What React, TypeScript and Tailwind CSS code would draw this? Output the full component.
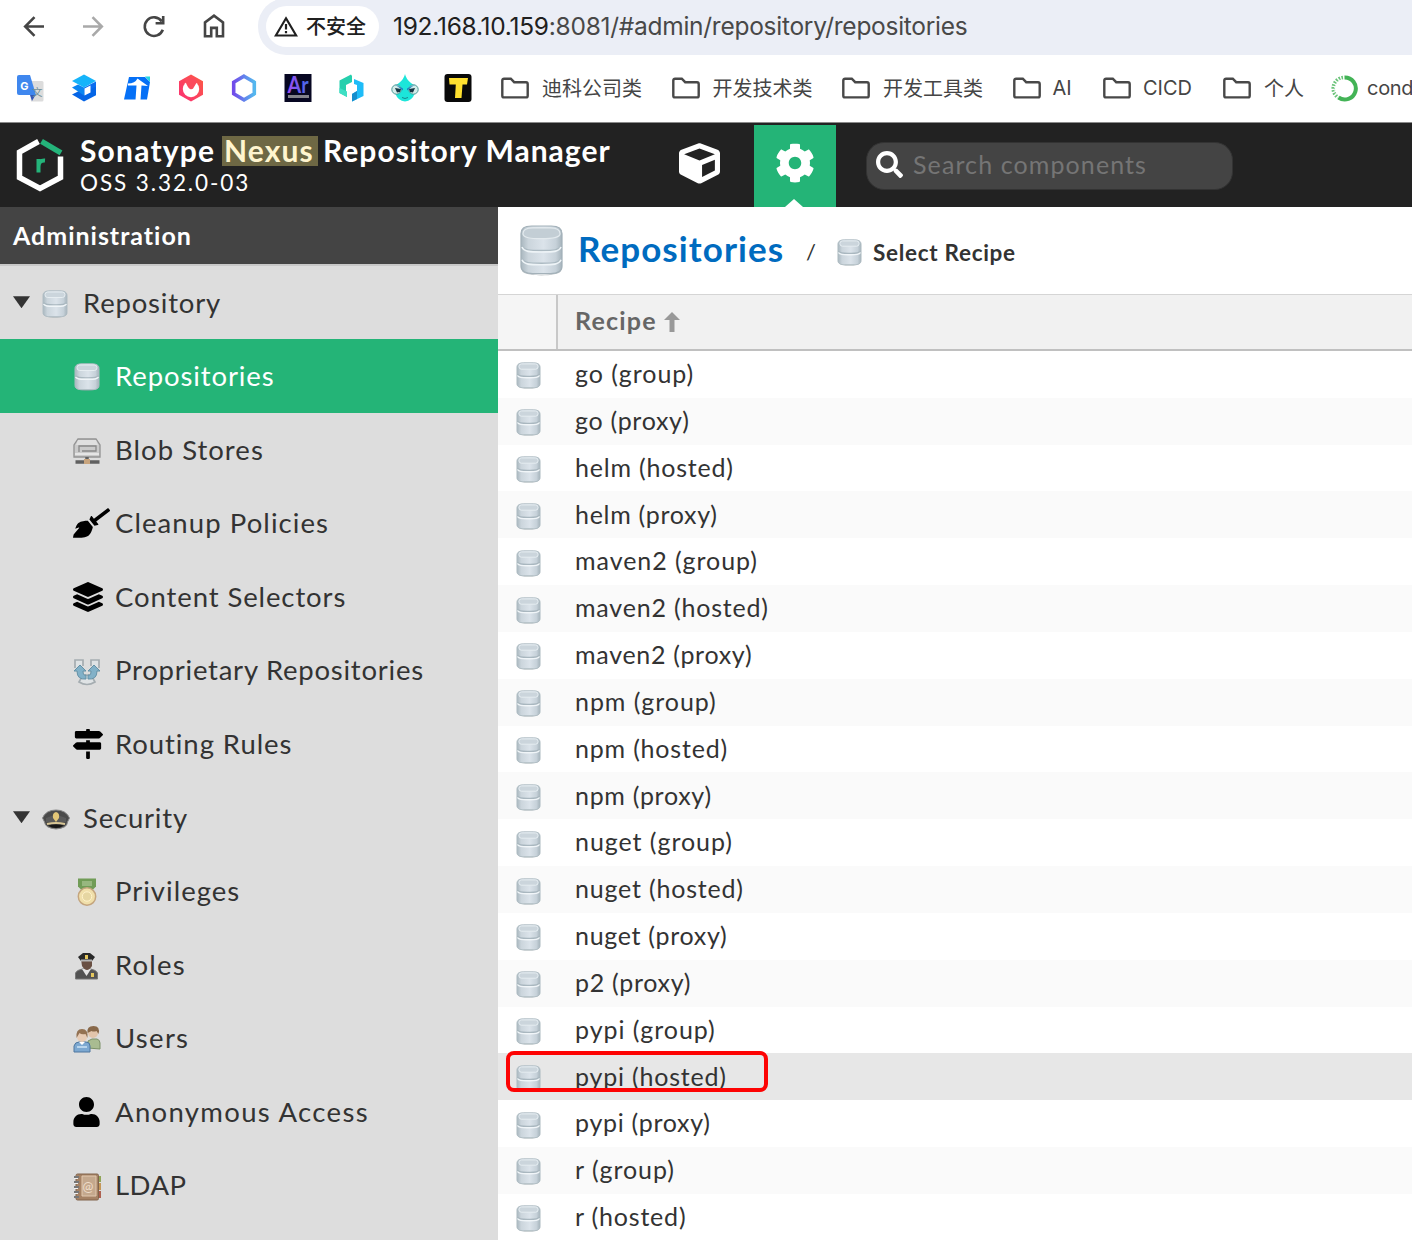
import React from "react";
import { FaBroom, FaCog, FaCube, FaLayerGroup, FaMapSigns, FaSearch, FaUser } from "react-icons/fa";

const cjk = "font-['Inter','Noto_Sans_CJK_SC',sans-serif]";

function DatabaseIcon({ className, tall = false }: { className: string; tall?: boolean }) {
  const id = React.useId();
  return (
    <svg viewBox={tall ? "0 0 44 52" : "0 0 26 28"} className={className} preserveAspectRatio="none">
      <defs>
        <linearGradient id={id} x1="0" x2="1" y1="0" y2="0">
          <stop offset="0" stopColor="#a9b7bf" />
          <stop offset="0.18" stopColor="#cbd5dc" />
          <stop offset="0.55" stopColor="#dbe3ea" />
          <stop offset="0.85" stopColor="#c6d1d9" />
          <stop offset="1" stopColor="#a5b3bb" />
        </linearGradient>
      </defs>
      {tall ? (
        <g>
          <path d="M2 44c2 9 38 9 40 0v3c-3 6-37 6-40 0z" fill="#7f8b92" opacity="0.5" />
          <path d="M1 9C1 4 4 1 12 1h20c8 0 11 3 11 8v33c0 5-5 7.500-12 7.500H13C6 49.500 1 47 1 42z" fill={`url(#${id})`} stroke="#a3b1b9" strokeWidth="1.200" />
          <path d="M3 9c0-4 4-6 10-6h18c6 0 10 2 10 6s-8 5-19 5S3 13 3 9z" fill="#c3ced5" stroke="#e3eaee" strokeWidth="1.300" />
          <path d="M2 21c2 5 8 5 20 5s18 0 20-5M2 34c2 5 8 5 20 5s18 0 20-5" fill="none" stroke="#acbac2" strokeWidth="1.500" />
          <path d="M2 22.500c2 5 8 5 20 5s18 0 20-5M2 35.500c2 5 8 5 20 5s18 0 20-5" fill="none" stroke="#eef4f7" strokeWidth="1.600" />
        </g>
      ) : (
        <g>
          <path d="M1 22c2 5 22 5 24 0v2c-2 5-22 5-24 0z" fill="#8b979e" opacity="0.5" />
          <path d="M1 5.500C1 2 4 .8 8 .8h10c4 0 7 1.200 7 4.700v17c0 3-3 4.200-7 4.200H8c-4 0-7-1.200-7-4.200z" fill={`url(#${id})`} stroke="#b0bdc4" strokeWidth="1" />
          <rect x="3" y="2" width="20" height="5.500" rx="2.700" fill="#cbd5dc" stroke="#e6edf1" strokeWidth="1" />
          <path d="M1.500 12.500c1.500 2.500 5 2.300 11.500 2.300s10 .2 11.500-2.300" fill="none" stroke="#a9b7bf" strokeWidth="1.300" />
          <path d="M1.500 14c1.500 2.500 5 2.300 11.500 2.300s10 .2 11.500-2.300" fill="none" stroke="#f0f5f8" strokeWidth="1.400" />
        </g>
      )}
    </svg>
  );
}

const Folder = () => (
  <svg viewBox="0 0 28 22" className="h-[22px] w-7 shrink-0" fill="none" stroke="#484848" strokeWidth="2.400">
    <path d="M3 1.700h6.800l3.400 3.500h11.800a1.700 1.700 0 0 1 1.700 1.700v11.800a1.700 1.700 0 0 1-1.700 1.700H3a1.700 1.700 0 0 1-1.700-1.700V3.400A1.700 1.700 0 0 1 3 1.700z" />
  </svg>
);

function Browser() {
  return (
    <div className={`h-[123px] overflow-hidden border-b border-[#8a8a8a] bg-white ${cjk}`}>
      <div className="flex h-[55px] overflow-hidden">
        <div className="flex h-[53px] w-[258px] shrink-0 items-center">
          <svg viewBox="0 0 258 53" className="h-[53px] w-[258px]" fill="none" stroke="#454545" strokeWidth="2.600">
            <path d="M44 26.500H25M34.500 17.200l-9.300 9.300 9.300 9.300" />
            <path d="M83 26.500h19M92.500 17.200l9.300 9.300-9.300 9.300" stroke="#a9a9a9" />
            <path d="M161.800 21.500a9.300 9.300 0 1 0 1 8.200M163.200 16v7.300h-7.600" />
            <path d="M205 36.300V22.400l9-6.700 9 6.700v13.900h-6.200v-8.400h-5.600v8.400z" />
          </svg>
        </div>
        <div className="mt-[-2px] flex h-[57px] flex-1 items-center rounded-l-[28px] bg-[#ebeef6] pl-2">
          <div className="flex h-[41px] w-[113px] shrink-0 items-center rounded-full bg-white pl-2">
            <svg viewBox="0 0 24 21" className="h-[21px] w-6" fill="none" stroke="#202020" strokeWidth="2.200">
              <path d="M12 2.300 22.200 19.500H1.800z" />
              <path d="M12 8v5.500M12 15v2.200" />
            </svg>
            <span className="ml-2 text-[20px] font-medium text-[#202020]">不安全</span>
          </div>
          <span className="ml-[14px] whitespace-nowrap text-[24.500px] tracking-[-0.270px] text-[#484848]">
            <span className="text-[#202020]">192.168.10.159</span>:8081/#admin/repository/repositories
          </span>
        </div>
      </div>
      <div className="flex h-[66px] items-center pl-[3.500px] text-[20px] text-[#454545]">
        {bookmarks.map((icon, i) => (
          <div key={i} className="flex w-[53.500px] shrink-0 justify-center">
            <svg viewBox="0 0 28 28" className="h-7 w-7">{icon}</svg>
          </div>
        ))}
        <div className="ml-4 flex items-center whitespace-nowrap">
          <div className="flex w-[170.500px] items-center gap-[13px]"><Folder /><span className="pt-0.5">迪科公司类</span></div>
          <div className="flex w-[170.500px] items-center gap-[13px]"><Folder /><span className="pt-0.5">开发技术类</span></div>
          <div className="flex w-[170.500px] items-center gap-[13px]"><Folder /><span className="pt-0.5">开发工具类</span></div>
          <div className="flex w-[90.500px] items-center gap-3"><Folder />AI</div>
          <div className="flex w-[120px] items-center gap-3"><Folder />CICD</div>
          <div className="flex w-[108px] items-center gap-[13px]"><Folder /><span className="pt-0.5">个人</span></div>
          <div className="flex items-center gap-[9px] tracking-[-0.3px]">
            <svg viewBox="0 0 27 27" className="h-[27px] w-[27px]" fill="none" stroke="#43b356" strokeWidth="4">
              <path d="M13.500 2.500a11 11 0 1 1-6 20" />
              <path d="M12 2.500a11 11 0 0 0-5 20" strokeDasharray="1.600 1.300" strokeWidth="3.600" opacity="0.8" />
              <path d="M9 5a10 10 0 0 0-3 15" strokeDasharray="1 2" stroke="#fff" strokeWidth="1.200" />
            </svg>
            cond
          </div>
        </div>
      </div>
    </div>
  );
}

const bookmarks = [
  <g>
    <path d="M13 7h13q1.500 0 1.500 1.500V26q0 1.500-1.500 1.500H15z" fill="#dcdcdc" />
    <path d="M3 1h11l6 20H3q-2 0-2-2V3q0-2 2-2z" fill="#3f87ee" />
    <path d="M14 21h5.500L16 27z" fill="#3455b8" />
    <text x="4.300" y="15.500" fontSize="11" fontWeight="700" fill="#fff">G</text>
    <text x="16" y="21.500" fontSize="10.500" fill="#71909a">文</text>
  </g>,
  <g>
    <path d="m2 20.500 6-3 18-9v12.700L14 27.500z" fill="#0565e6" />
    <path d="m2 13.500 6-3 6 3v8z" fill="#0a86f2" />
    <path d="m14 13.500 12-6v5l-12 6z" fill="#0a6cf0" />
    <path d="M14 .5 26 7l-12 6.500L2 7z" fill="#16b4fa" />
    <path d="m14.500 14.500 6-3v7l-6 3z" fill="#fff" />
  </g>,
  <g>
    <path d="M6 3h16l5 5-3 17.500H1z" fill="#0570f6" />
    <path d="M22 2.500h5V8z" fill="#21d7e2" />
    <path d="M5 9.500q7 0 9.500-5L25 12l-6.500-.5L17.500 26h-5l1-14.500H5z" fill="#fff" />
  </g>,
  <g>
    <defs><linearGradient id="hexRed" x1="0" x2="1" y1="1" y2="0"><stop stopColor="#fb2f75" /><stop offset="1" stopColor="#fc5b43" /></linearGradient></defs>
    <path d="m14 .5 12 6.700v13.600L14 27.500 2 20.800V7.200z" fill="url(#hexRed)" />
    <circle cx="14" cy="15" r="8.200" fill="#fff" />
    <path d="M9 4h9l2 4-3 5q-1 3-4 2-2-1-4-6z" fill="#fb4a5c" />
  </g>,
  <g>
    <defs><linearGradient id="hex"><stop stopColor="#724bea" /><stop offset="1" stopColor="#54b8ee" /></linearGradient></defs>
    <path d="m14 2.200 10.300 6v11.600L14 25.800 3.700 19.800V8.200z" fill="none" stroke="url(#hex)" strokeWidth="3.600" />
  </g>,
  <g>
    <path d="M.5 0h27v28H.5z" fill="#070722" />
    <defs><linearGradient id="ar"><stop stopColor="#a64bf4" /><stop offset="1" stopColor="#416be8" /></linearGradient></defs>
    <text x="3.500" y="19" fontSize="23" fontWeight="700" fill="url(#ar)" fontFamily="Lato" textLength="21" lengthAdjust="spacingAndGlyphs">Ar</text>
    <path d="M4 21h21v3H4z" fill="#83838c" />
  </g>,
  <g>
    <path d="M14 .5 2.500 6.500V19l7.500 4v-5l-1-1v-6l6-3V2z" fill="#25cfad" />
    <path d="m2.500 14 6.500 3 1 1v5l-7.500-4z" fill="#3fdfc4" />
    <path d="m17 5 9.500 4v13L15 27.500V20l5-3v-6l-3-1z" fill="#1ebcf8" />
    <path d="m15 20 5-3v8l-5 2.500z" fill="#178dcc" />
  </g>,
  <g>
    <path d="M14 0q1 5 6 9 6 3 4 10-3 8-10 8.500Q7 27 4 19 2 12 8 9q5-4 6-9z" fill="#1ce6da" />
    <circle cx="5.500" cy="15.500" r="4.700" fill="#d3ece9" stroke="#4b9997" />
    <circle cx="22.500" cy="15.500" r="4.700" fill="#d3ece9" stroke="#4b9997" />
    <path d="m4 10.500 8 4v2zM24 10.500l-8 4v2z" fill="#1c83c4" />
    <path d="m4 14 6 1-1 3-3 .5zM24 14l-6 1 1 3 3 .5z" fill="#173744" />
    <path d="m11 23.500 3 1 3-1" fill="none" stroke="#178a8d" />
  </g>,
  <g>
    <rect x="0.500" y="0" width="27" height="28" rx="3" fill="#090909" />
    <path d="M5 4h19l-1 6.500h-4.500l-1 13.500h-6.500l.8-13.500H5.500z" fill="#ffe02f" />
  </g>,
];

function Header() {
  return (
    <header className="flex h-[84px] bg-[#222] text-white">
      <svg viewBox="0 0 48 54" className="ml-4 mt-[15px] h-[54px] w-12 shrink-0" fill="none">
        <path d="M22.500 3.500 3.500 14v25.500L24 50.500l20.500-11V18.500" stroke="#fff" strokeWidth="5.500" />
        <path d="m25.500 3.300 19.500 11.500" stroke="#24b47a" strokeWidth="5.500" />
        <path d="M22.500 34.500V21m0 8q0-7 6.500-6.500" stroke="#24b47a" strokeWidth="4" />
      </svg>
      <div className="ml-4 mt-3 w-[570px] shrink-0 whitespace-nowrap">
        <div className="flex h-[32px] items-center text-[30px] font-bold leading-8">
          <span className="-mt-0.5 w-[142px] tracking-[1.200px]">Sonatype</span>
          <span className="mr-[5px] flex h-[30px] w-[96px] items-center bg-[#6e6844] pl-[2px] tracking-[1.100px] text-[#fff5cf]">
            <span className="-mt-0.5">Nexus</span>
          </span>
          <span className="-mt-0.5 tracking-[1.020px]">Repository Manager</span>
        </div>
        <div className="text-[22.500px] leading-[31px] tracking-[1.900px]">OSS 3.32.0-03</div>
      </div>
      <div className="ml-[29px] flex w-[41px] shrink-0 pt-5"><FaCube size={41} /></div>
      <div className="relative ml-[34px] mt-[2px] flex h-[82px] w-[82px] shrink-0 justify-center bg-[#24b477] pt-[18px]">
        <FaCog size={40} />
        <span className="absolute bottom-0 left-[31px] h-2 w-[18px] bg-white [clip-path:polygon(50%_0,100%_100%,0_100%)]" />
      </div>
      <div className="ml-[30px] mt-[19px] flex h-12 w-[367px] shrink-0 items-center rounded-[18px] border border-[#333] bg-[#444] pl-[9px]">
        <FaSearch size={27} className="-mt-1" />
        <span className="-mt-0.5 ml-[10px] text-[25px] tracking-[1.100px] text-[#757575]">Search components</span>
      </div>
    </header>
  );
}

const iconBox = "h-7 w-7";
const BlobIcon = () => (
  <svg viewBox="0 0 28 28" className={iconBox}>
    <path d="M5 2h18l4 6v12H1V8z" fill="#cacaca" stroke="#929292" strokeWidth="1.300" />
    <path d="M5 3h18l2 5H3z" fill="#dfdfdf" />
    <path d="M6 15V9h17v5H9" fill="none" stroke="#888" strokeWidth="1.300" />
    <path d="M2 17h24" stroke="#eee" strokeWidth="1.500" />
    <path d="M14 20v4M2.500 25h24" stroke="#606060" strokeWidth="3.500" />
    <path d="M11 22h6v5h-6z" fill="#c8a47d" />
  </svg>
);
const ProprietaryIcon = () => (
  <svg viewBox="0 0 28 28" className={iconBox} fill="none">
    <path d="M2 10V2h8v6M18 8V2h8v8M6 24q8 5 16 0l-4-7h-8z" fill="#dfe3e5" stroke="#a5adb1" strokeWidth="1.700" />
    <path d="m1 13 6-6 6 6h-3q0 5 3 4v4Q4 22 4 13zM27 13l-6-6-6 6h3q0 5-3 4v4q9 1 9-8z" fill="#82b1c8" stroke="#6591a6" />
  </svg>
);
const SecurityIcon = () => (
  <svg viewBox="0 0 28 28" className={iconBox}>
    <path d="M.5 13Q4 5 14 5t13.500 8l-2 4q0 6-11.500 7Q3 23 2.500 17z" fill="#4a4a4a" stroke="#888" />
    <path d="M4 13q10-5 20 0v4H4z" fill="#5a5a5a" />
    <path d="M5 19q9-2 18 0" stroke="#d8c696" strokeWidth="2" fill="none" />
    <path d="M6 20.500q8-2 16 0-8 5-16 0z" fill="#171717" />
    <path d="M14 7q4 1 3 6l-3 4-3-4q-1-5 3-6z" fill="#e4c777" />
  </svg>
);
const PrivilegesIcon = () => (
  <svg viewBox="0 0 28 28" className={iconBox}>
    <path d="M5 .5h18v8l-4 4H9l-4-4z" fill="#719c57" />
    <path d="M9 3h10v5H9z" fill="#97b77f" />
    <circle cx="14" cy="18.500" r="8.700" fill="#f0dfaa" stroke="#c4a57e" strokeWidth="1.500" />
    <circle cx="14" cy="18.500" r="4.700" fill="#e6d6a2" stroke="#fff2ca" />
  </svg>
);
const RolesIcon = () => (
  <svg viewBox="0 0 28 28" className={iconBox}>
    <path d="M2.500 27v-6q1-3 7-4h8q6 1 7 4v6z" fill="#535353" stroke="#777" />
    <path d="m9 17 4.500 7 4.500-7z" fill="#e6e6e6" />
    <path d="M8 7h11v7q-5 8-10 0z" fill="#6a5043" />
    <path d="m5 5 5-4h7l5 4-3 4H8z" fill="#292929" />
    <path d="M8 7.500h11v2H8z" fill="#b6b6b6" />
    <path d="M12 3h3v4h-3zM18 21h3v4h-3z" fill="#e5c75e" />
  </svg>
);
const UsersIcon = () => (
  <svg viewBox="0 0 28 28" className={iconBox}>
    <path d="M15 23v-7l4-2h5q3 1 3 4v6z" fill="#a9bc91" stroke="#7c9168" />
    <circle cx="20" cy="8" r="5" fill="#e2c5ab" />
    <path d="M14.500 8q-1-7 6-7t5 8l-2-3q-3 1-5 0z" fill="#886849" />
    <path d="M1 27v-6q1-4 5-4h7q4 0 4 4v6z" fill="#7ca8d1" stroke="#4e779f" />
    <path d="m6 17 3 3 3-3z" fill="#fff" />
    <circle cx="9" cy="12" r="5" fill="#e7ccb6" />
    <path d="M3.500 13q-1-9 5.500-9t5.500 9l-2-4q-4 1-6-1z" fill="#937253" />
    <path d="M4 22h10" stroke="#b9d5ec" strokeWidth="2" />
  </svg>
);
const LdapIcon = () => (
  <svg viewBox="0 0 28 28" className={iconBox}>
    <path d="M24 3h4v6h-4z" fill="#91a557" />
    <path d="M24 10h4v7h-4z" fill="#c59758" />
    <path d="M24 18h4v7h-4z" fill="#ae6150" />
    <rect x="3" y="1" width="22.500" height="26" rx="1.500" fill="#a58265" stroke="#82654c" />
    <path d="M9 3h14v20H9z" fill="#c4a88d" stroke="#e1c8af" />
    <text x="9.500" y="18" fontSize="13" fill="#efddca">@</text>
    <path d="M1 4h5M1 9h5M1 14h5M1 19h5M1 24h5" stroke="#777" strokeWidth="2" />
    <path d="M1 5.500h4M1 10.500h4M1 15.500h4M1 20.500h4" stroke="#eee" />
  </svg>
);

type NavItem = { label: string; icon: React.ReactNode; tracking: string; group?: boolean; active?: boolean };
const nav: NavItem[] = [
  { label: "Repository", icon: <DatabaseIcon className="h-7 w-[26px]" />, group: true, tracking: "tracking-[0.800px]" },
  { label: "Repositories", icon: <DatabaseIcon className="ml-px h-7 w-[26px]" />, active: true, tracking: "tracking-[0.900px]" },
  { label: "Blob Stores", icon: <BlobIcon />, tracking: "tracking-[1.020px]" },
  { label: "Cleanup Policies", icon: <FaBroom className="-mt-0.5 h-[30px] w-[37px] shrink-0 text-black" />, tracking: "tracking-[1.080px]" },
  { label: "Content Selectors", icon: <FaLayerGroup className="-mt-0.5 h-[30px] w-[30px] text-black" />, tracking: "tracking-[0.900px]" },
  { label: "Proprietary Repositories", icon: <ProprietaryIcon />, tracking: "tracking-[0.760px]" },
  { label: "Routing Rules", icon: <FaMapSigns className="-mt-0.5 h-[30px] w-[30px] text-black" />, tracking: "tracking-[0.930px]" },
  { label: "Security", icon: <SecurityIcon />, group: true, tracking: "tracking-[0.800px]" },
  { label: "Privileges", icon: <PrivilegesIcon />, tracking: "tracking-[1px]" },
  { label: "Roles", icon: <RolesIcon />, tracking: "tracking-[1.200px]" },
  { label: "Users", icon: <UsersIcon />, tracking: "tracking-[1.300px]" },
  { label: "Anonymous Access", icon: <FaUser className="-mt-0.5 h-[30px] w-[27px] text-black" />, tracking: "tracking-[1.330px]" },
  { label: "LDAP", icon: <LdapIcon />, tracking: "tracking-[0.500px]" },
];

function Sidebar() {
  return (
    <aside className="w-[498px] shrink-0 bg-[#ddd]">
      <div className="flex h-[58.500px] items-center border-b-2 border-[#c8c8c8] bg-[#444] pl-[13px] text-[25px] font-bold tracking-[0.980px] text-white">
        Administration
      </div>
      {nav.map((n) => (
        <div
          key={n.label}
          className={`flex h-[73.570px] items-center whitespace-nowrap text-[27.500px] ${n.group ? "pl-[13px]" : "pl-[73px]"} ${n.active ? "bg-[#24b477] text-white" : "text-[#333]"}`}
        >
          {n.group && <span className="mr-[12px] h-[12px] w-[17px] bg-[#333] [clip-path:polygon(0_0,100%_0,50%_100%)]" />}
          <span className={`flex shrink-0 items-center pt-[3px] ${n.group ? "w-[41px]" : "w-[42px]"}`}>{n.icon}</span>
          <span className={n.tracking}>{n.label}</span>
        </div>
      ))}
    </aside>
  );
}

const recipes: { name: string; kind: "group" | "hosted" | "proxy" }[] = [
  { name: "go", kind: "group" },
  { name: "go", kind: "proxy" },
  { name: "helm", kind: "hosted" },
  { name: "helm", kind: "proxy" },
  { name: "maven2", kind: "group" },
  { name: "maven2", kind: "hosted" },
  { name: "maven2", kind: "proxy" },
  { name: "npm", kind: "group" },
  { name: "npm", kind: "hosted" },
  { name: "npm", kind: "proxy" },
  { name: "nuget", kind: "group" },
  { name: "nuget", kind: "hosted" },
  { name: "nuget", kind: "proxy" },
  { name: "p2", kind: "proxy" },
  { name: "pypi", kind: "group" },
  { name: "pypi", kind: "hosted" },
  { name: "pypi", kind: "proxy" },
  { name: "r", kind: "group" },
  { name: "r", kind: "hosted" },
];

const kindTracking = {
  group: "tracking-[0.950px]",
  hosted: "tracking-[0.800px]",
  proxy: "tracking-[0.700px]",
};

function Content() {
  return (
    <main className="min-w-0 flex-1 bg-white">
      <div className="flex h-[87px] items-center pl-[22px]">
        <DatabaseIcon tall className="h-[51px] w-[43px]" />
        <span className="-mt-1 ml-[15px] w-[228px] text-[35px] font-bold tracking-[1.080px] text-[#006bbf]">Repositories</span>
        <span className="mt-0.5 w-[31px] text-[22px] text-[#333]">/</span>
        <DatabaseIcon className="mt-1 h-[27px] w-[25px]" />
        <span className="ml-[11px] mt-1 text-[22.500px] font-bold tracking-[0.700px] text-[#333]">Select Recipe</span>
      </div>
      <div className="flex h-[57px] border-b-2 border-t border-b-[#c0c0c0] border-t-[#d5d5d5] bg-[#f1f1f1]">
        <div className="w-[60px] border-r-2 border-[#c8c8c8] bg-[#f5f5f5]" />
        <div className="flex items-center pl-[17px] text-[25px] font-bold tracking-[1.200px] text-[#666]">
          <span className="-mt-0.5">Recipe</span>
          <svg viewBox="0 0 16 20" className="ml-[7px] h-5 w-4"><path d="m8 0 8 8h-5.500v12h-5V8H0z" fill="#999" /></svg>
        </div>
      </div>
      {recipes.map(({ name, kind }, i) => {
        const selected = name === "pypi" && kind === "hosted";
        return (
          <div
            key={`${name}-${kind}`}
            className={`relative flex h-[46.830px] items-center pl-[18px] text-[25px] text-[#333] ${selected ? "bg-[#e7e7e7]" : i % 2 ? "bg-[#fafafa]" : "bg-white"}`}
          >
            <DatabaseIcon className="mt-[3px] h-[27px] w-[25px]" />
            <span className={`-mt-px ml-[34px] ${kindTracking[kind]}`}>{`${name} (${kind})`}</span>
            {selected && (
              <span className="absolute left-2 top-[-2px] h-[41px] w-[262px] rounded-[8px] border-[4.500px] border-[#fd0303]" />
            )}
          </div>
        );
      })}
    </main>
  );
}

export default function App() {
  return (
    <div className="h-[1240px] w-[1412px] overflow-hidden bg-white font-['Lato',sans-serif]">
      <Browser />
      <Header />
      <div className="flex h-[1033px] overflow-hidden">
        <Sidebar />
        <Content />
      </div>
    </div>
  );
}
